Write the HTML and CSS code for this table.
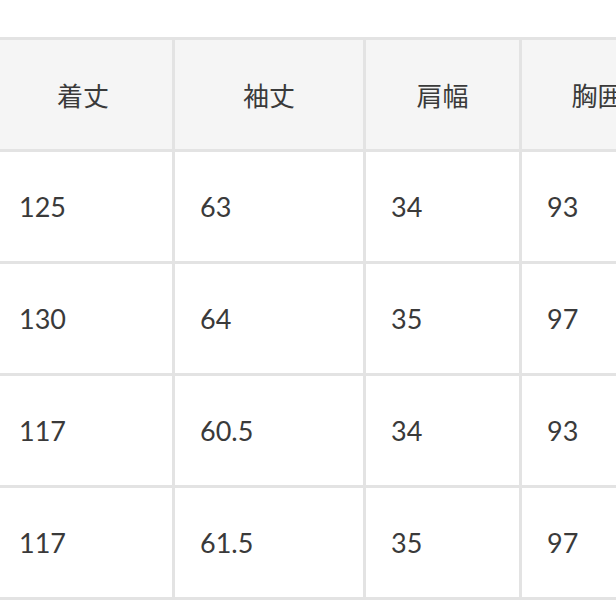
FILE: index.html
```html
<!DOCTYPE html>
<html lang="ja">
<head>
<meta charset="utf-8">
<link rel="stylesheet" href="styles.css">
</head>
<body>
<table class="size-table">
  <colgroup>
    <col class="c1"><col class="c2"><col class="c3"><col class="c4">
  </colgroup>
  <thead>
    <tr><th>着丈</th><th>袖丈</th><th>肩幅</th><th>胸囲</th></tr>
  </thead>
  <tbody>
    <tr><td>125</td><td>63</td><td>34</td><td>93</td></tr>
    <tr><td>130</td><td>64</td><td>35</td><td>97</td></tr>
    <tr><td>117</td><td>60.5</td><td>34</td><td>93</td></tr>
    <tr><td>117</td><td>61.5</td><td>35</td><td>97</td></tr>
  </tbody>
</table>
</body>
</html>
```

FILE: styles.css
```css
html, body {
  margin: 0;
  padding: 0;
  background: #ffffff;
  overflow: hidden;
}
body {
  width: 616px;
  height: 616px;
  position: relative;
}
.size-table {
  border-collapse: collapse;
  table-layout: fixed;
  width: 682px;
  margin: 37px 0 0 -9px;
  color: #3a3a3a;
}
.c1 { width: 181px; }
.c2 { width: 191px; }
.c3 { width: 156px; }
.c4 { width: 154px; }
.size-table th,
.size-table td {
  border: 3px solid #e3e3e3;
  height: 112px;
  box-sizing: border-box;
  padding: 0;
}
.size-table th {
  background: #f5f5f5;
  font-family: "Noto Sans CJK JP", "Noto Sans", sans-serif;
  font-weight: 400;
  font-size: 26px;
  text-align: center;
}
.size-table td {
  background: #ffffff;
  font-family: Lato, "Liberation Sans", sans-serif;
  font-size: 27px;
  text-align: left;
  padding-left: 25px;
}
```
